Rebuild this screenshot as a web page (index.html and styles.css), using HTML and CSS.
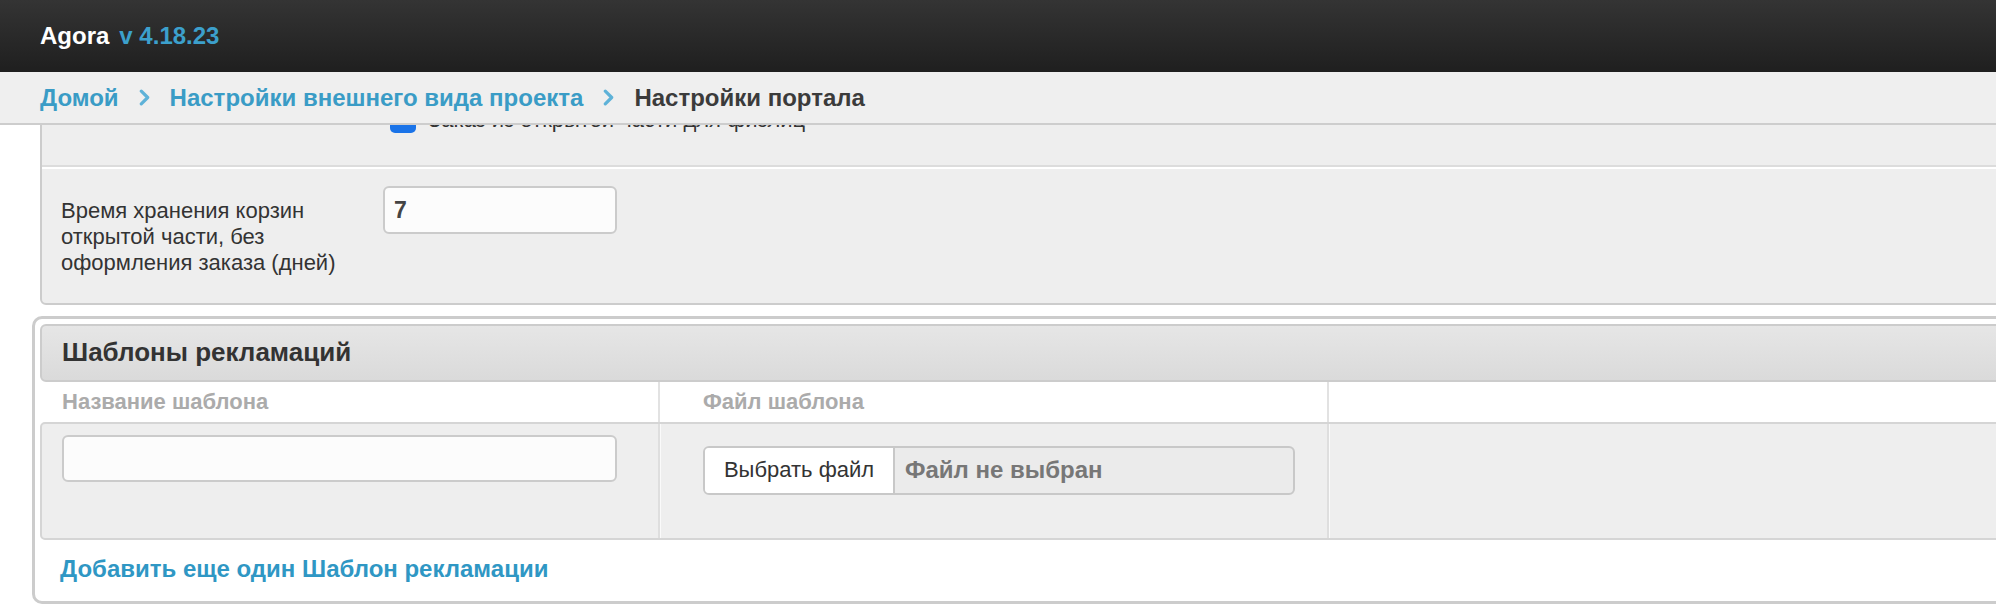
FILE: index.html
```html
<!DOCTYPE html>
<html lang="ru">
<head>
<meta charset="utf-8">
<title>Agora — Настройки портала</title>
<link rel="stylesheet" href="styles.css">
</head>
<body>
<header class="topbar">
  <span class="brand">Agora</span>
  <span class="version">v 4.18.23</span>
</header>
<nav class="crumbs">
  <a class="crumb-link" href="#">Домой</a>
  <svg class="crumb-sep" viewBox="0 0 12 16" aria-hidden="true"><polyline points="3,2 9,8 3,14" fill="none" stroke="#5eb2d8" stroke-width="3" stroke-linecap="round" stroke-linejoin="round"/></svg>
  <a class="crumb-link" href="#">Настройки внешнего вида проекта</a>
  <svg class="crumb-sep" viewBox="0 0 12 16" aria-hidden="true"><polyline points="3,2 9,8 3,14" fill="none" stroke="#5eb2d8" stroke-width="3" stroke-linecap="round" stroke-linejoin="round"/></svg>
  <span class="crumb-current">Настройки портала</span>
</nav>
<main class="viewport">
  <div class="scroll">
    <section class="panel">
      <div class="row row-check">
        <div class="label"></div>
        <label class="check"><span class="check-box"></span><span>Заказ из открытой части для физлиц</span></label>
      </div>
      <div class="row row-field">
        <div class="label">Время хранения корзин открытой части, без оформления заказа (дней)</div>
        <input class="input input-days" type="text" value="7">
      </div>
    </section>
    <section class="group">
      <div class="group-head">Шаблоны рекламаций</div>
      <div class="thead">
        <div class="cell c1 th">Название шаблона</div>
        <div class="cell c2 th">Файл шаблона</div>
        <div class="cell c3"></div>
      </div>
      <div class="trow">
        <div class="cell c1 td1"><input class="input input-name" type="text"></div>
        <div class="cell c2 td2">
          <div class="file">
            <span class="file-btn">Выбрать файл</span>
            <span class="file-name">Файл не выбран</span>
          </div>
        </div>
        <div class="cell c3"></div>
      </div>
      <a class="add" href="#">Добавить еще один Шаблон рекламации</a>
    </section>
  </div>
</main>
</body>
</html>
```
FILE: styles.css
```css
* { box-sizing: border-box; }
html, body { margin: 0; padding: 0; }
body {
  width: 1996px;
  height: 610px;
  overflow: hidden;
  background: #fff;
  color: #333;
  font-family: "Liberation Sans", Arial, Helvetica, sans-serif;
}

.topbar {
  height: 72px;
  display: flex;
  align-items: center;
  padding-left: 40px;
  background: linear-gradient(#343434, #1f1f1f);
  font-size: 24px;
  font-weight: bold;
}
.brand { color: #fff; }
.version { color: #3ca0cc; margin-left: 10px; }

.crumbs {
  height: 53px;
  display: flex;
  align-items: center;
  gap: 19px;
  padding-left: 40px;
  background: #efefef;
  border-bottom: 2px solid #cdcdcd;
  font-size: 24px;
  font-weight: bold;
}
.crumb-link { color: #3a9cc6; text-decoration: none; }
.crumb-sep { width: 13px; height: 17px; flex: none; }
.crumb-current { color: #3b3b3b; }

.viewport { height: 485px; overflow: hidden; }
.scroll { width: 2300px; padding-left: 32px; margin-top: -20px; }

.panel {
  margin-left: 8px;
  border: 2px solid #ccc;
  border-radius: 6px;
  background: #eee;
}
.row { display: flex; }
.row-check {
  height: 60px;
  align-items: flex-end;
  padding: 0 0 32px 19px;
  border-bottom: 2px solid #dcdcdc;
}
.row-field {
  align-items: baseline;
  padding: 17px 0 27px 19px;
  border-top: 2px solid #fff;
}
.label {
  width: 300px;
  flex: none;
  font-size: 22px;
  line-height: 26px;
  color: #333;
}
.check {
  margin-left: 29px;
  display: flex;
  align-items: center;
  gap: 12px;
  font-size: 22px;
  line-height: 26px;
  color: #333;
}
.check-box {
  width: 26px;
  height: 26px;
  border-radius: 5px;
  background: #1a73e8;
}

.input {
  height: 48px;
  border: 2px solid #cbcbcb;
  border-radius: 6px;
  background: #fcfcfc;
  padding: 0 9px;
  font-family: "Liberation Sans", Arial, sans-serif;
  font-size: 23px;
  font-weight: bold;
  color: #444;
  outline: none;
}
.input-days { width: 234px; margin-left: 22px; }
.input-name { width: 555px; height: 47px; }

.group {
  margin-top: 11px;
  border: 3px solid #ccc;
  border-radius: 10px;
  padding: 5px;
}
.group-head {
  height: 58px;
  display: flex;
  align-items: center;
  padding-left: 20px;
  border: 2px solid #ccc;
  border-radius: 6px;
  background: linear-gradient(#e6e6e6, #dadada);
  font-size: 26px;
  font-weight: bold;
  color: #333;
}

.thead { display: flex; height: 40px; padding-left: 2px; }
.trow {
  display: flex;
  height: 118px;
  border: 2px solid #d5d5d5;
  border-radius: 5px;
  background: #eee;
}
.cell { flex: none; }
.c1 { width: 616px; padding-left: 20px; }
.c2 { width: 669px; padding-left: 43px; border-left: 2px solid #e2e2e2; }
.c3 { flex: 1; border-left: 2px solid #e2e2e2; }
.trow .c2, .trow .c3 { box-shadow: inset 1px 0 0 #fafafa; border-left-color: #dedede; }
.th {
  display: flex;
  align-items: center;
  font-size: 22px;
  font-weight: bold;
  color: #ababab;
}
.td1 { padding-top: 11px; }
.td2 { padding-top: 22px; }

.file {
  display: flex;
  width: 592px;
  height: 49px;
  border: 2px solid #c8c8c8;
  border-radius: 6px;
  overflow: hidden;
  background: #ebebeb;
}
.file-btn {
  width: 190px;
  display: flex;
  align-items: center;
  justify-content: center;
  background: #fff;
  border-right: 2px solid #c8c8c8;
  font-size: 22px;
  color: #333;
}
.file-name {
  display: flex;
  align-items: center;
  padding-left: 10px;
  font-size: 24px;
  font-weight: bold;
  color: #777;
}

.add {
  display: block;
  margin: 16px 0 14px 20px;
  font-size: 24px;
  line-height: 26px;
  font-weight: bold;
  color: #2f97c4;
  text-decoration: none;
}
```
